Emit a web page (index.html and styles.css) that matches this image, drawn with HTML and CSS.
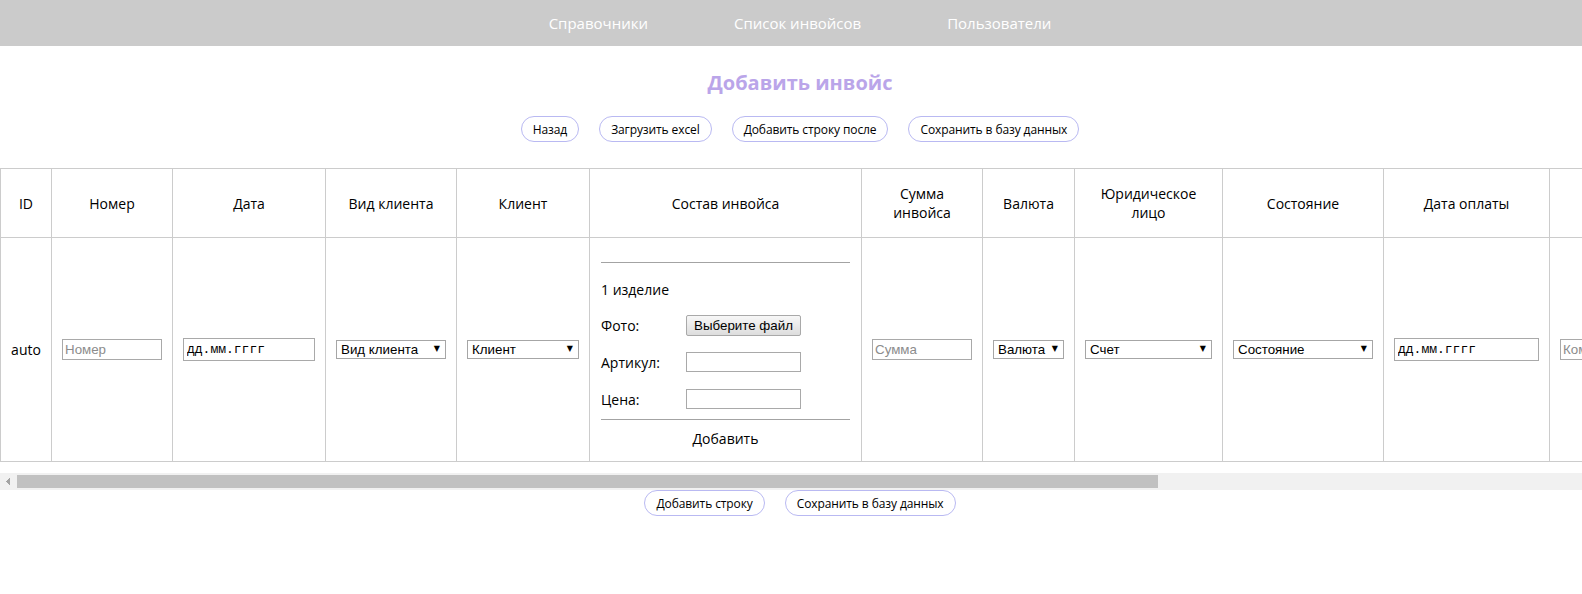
FILE: index.html
```html
<!DOCTYPE html>
<html lang="ru">
<head>
  <meta charset="UTF-8">
  <meta name="viewport" content="width=device-width, initial-scale=1.0">
  <title>Добавить инвойс</title>
  <link rel="stylesheet" href="styles.css">
</head>
<body>
  <nav class="topnav">
    <a href="#">Справочники</a>
    <a href="#">Список инвойсов</a>
    <a href="#">Пользователи</a>
  </nav>

  <main class="invoice-page">
    <h1 class="page-title">Добавить инвойс</h1>

    <div class="actions actions-top">
      <button class="pill-btn">Назад</button>
      <button class="pill-btn">Загрузить excel</button>
      <button class="pill-btn">Добавить строку после</button>
      <button class="pill-btn">Сохранить в базу данных</button>
    </div>

    <div class="table-scroll">
      <table class="invoice-table">
        <colgroup>
          <col style="width: 51px">
          <col style="width: 121px">
          <col style="width: 153px">
          <col style="width: 131px">
          <col style="width: 133px">
          <col style="width: 272px">
          <col style="width: 121px">
          <col style="width: 92px">
          <col style="width: 148px">
          <col style="width: 161px">
          <col style="width: 166px">
          <col style="width: 216px">
          <col style="width: 200px">
          <col style="width: 195px">
        </colgroup>
        <thead>
          <tr>
            <th>ID</th>
            <th>Номер</th>
            <th>Дата</th>
            <th>Вид клиента</th>
            <th>Клиент</th>
            <th>Состав инвойса</th>
            <th>Сумма<br>инвойса</th>
            <th>Валюта</th>
            <th>Юридическое<br>лицо</th>
            <th>Состояние</th>
            <th>Дата оплаты</th>
            <th></th>
            <th></th>
            <th></th>
          </tr>
        </thead>
        <tbody>
          <tr>
            <td>auto</td>
            <td><input class="field" type="text" placeholder="Номер"></td>
            <td><input class="field field-date" type="text" value="дд.мм.гггг"></td>
            <td>
              <span class="select-box">
                <select><option>Вид клиента</option></select>
              </span>
            </td>
            <td>
              <span class="select-box">
                <select><option>Клиент</option></select>
              </span>
            </td>
            <td class="composition">
              <div class="item-block">
                <div class="item-title">1 изделие</div>
                <div class="item-field">
                  <span class="item-label">Фото:</span>
                  <button class="file-btn">Выберите файл</button>
                </div>
                <div class="item-field">
                  <span class="item-label">Артикул:</span>
                  <input class="item-input" type="text">
                </div>
                <div class="item-field">
                  <span class="item-label">Цена:</span>
                  <input class="item-input" type="text">
                </div>
              </div>
              <div class="item-add">Добавить</div>
            </td>
            <td><input class="field" type="text" placeholder="Сумма"></td>
            <td>
              <span class="select-box">
                <select><option>Валюта</option></select>
              </span>
            </td>
            <td>
              <span class="select-box">
                <select><option>Счет</option></select>
              </span>
            </td>
            <td>
              <span class="select-box">
                <select><option>Состояние</option></select>
              </span>
            </td>
            <td><input class="field field-date" type="text" value="дд.мм.гггг"></td>
            <td><input class="field" type="text" placeholder="Комментарий"></td>
            <td></td>
            <td></td>
          </tr>
        </tbody>
      </table>
    </div>

    <div class="hscroll">
      <span class="hscroll-arrow"></span>
      <span class="hscroll-thumb"></span>
    </div>

    <div class="actions actions-bottom">
      <button class="pill-btn">Добавить строку</button>
      <button class="pill-btn">Сохранить в базу данных</button>
    </div>
  </main>
</body>
</html>
```

FILE: styles.css
```css
/* Base */
* {
  box-sizing: border-box;
}

body {
  margin: 0;
  font-family: 'Open Sans', 'Liberation Sans', sans-serif;
  color: #000;
  background-color: #fff;
}

/* Top navigation */
.topnav {
  display: flex;
  justify-content: center;
  gap: 86px;
  height: 46px;
  padding-left: 18px;
  background-color: #cbcbcb;
}

.topnav a {
  color: #fff;
  font-size: 15px;
  line-height: 46px;
  text-decoration: none;
}

/* Title and action buttons */
.page-title {
  margin: 23px 0 0;
  padding-left: 18px;
  text-align: center;
  font-size: 20px;
  line-height: 27px;
  font-weight: 700;
  color: #baa5e9;
}

.actions {
  display: flex;
  justify-content: center;
  gap: 20px;
  padding-left: 18px;
}

.actions-top {
  margin: 20px 0 26px;
}

.pill-btn {
  height: 26px;
  padding: 0 11px;
  border: 1px solid #b9b9f2;
  border-radius: 13px;
  background-color: #fff;
  font-family: 'Open Sans', sans-serif;
  font-size: 12px;
  letter-spacing: -0.1px;
  color: #000;
  cursor: pointer;
}

/* Table */
.table-scroll {
  overflow: hidden;
  padding-bottom: 11px;
}

/* horizontal scrollbar of the table area */
.hscroll {
  display: flex;
  align-items: center;
  height: 17px;
  background-color: #f1f1f1;
}

.hscroll-arrow {
  width: 17px;
  height: 17px;
  flex-shrink: 0;
  background:
    linear-gradient(to bottom right, transparent 50%, #a3a3a3 50%) 6px 5px / 4px 4px no-repeat,
    linear-gradient(to top right, transparent 50%, #a3a3a3 50%) 6px 9px / 4px 4px no-repeat;
}

.hscroll-thumb {
  width: 1141px;
  height: 13px;
  background-color: #c1c1c1;
}

.invoice-table {
  width: 2160px;
  table-layout: fixed;
  border-collapse: collapse;
}

.invoice-table th,
.invoice-table td {
  border: 1px solid #ccc;
  padding: 0 10px;
  text-align: center;
  vertical-align: middle;
  font-size: 14px;
  line-height: 19px;
}

.invoice-table th {
  padding: 15px 10px;
  font-weight: 400;
}

/* Form controls */
.field {
  display: block;
  width: 100%;
  height: 21px;
  padding: 0 2px;
  border: 1px solid #a9a9a9;
  font-family: 'Liberation Sans', Arial, sans-serif;
  font-size: 13.33px;
  color: #000;
}

.field::placeholder {
  color: #8c8c8c;
}

.field-date {
  height: 23px;
  padding: 0 3px;
  font-family: 'Liberation Mono', monospace;
  font-size: 13px;
}

.select-box {
  position: relative;
  display: block;
}

.select-box select {
  display: block;
  width: 100%;
  height: 19px;
  padding: 0 16px 0 4px;
  border: 1px solid #a6a6a6;
  border-radius: 0;
  background-color: #fff;
  font-family: 'Liberation Sans', Arial, sans-serif;
  font-size: 13.33px;
  color: #000;
  appearance: none;
  -webkit-appearance: none;
}

.select-box::after {
  content: "▼";
  position: absolute;
  right: 6px;
  top: 4px;
  font-family: 'DejaVu Sans', sans-serif;
  font-size: 8px;
  line-height: 10px;
  pointer-events: none;
}

/* Invoice composition cell */
.invoice-table td.composition {
  padding: 24px 11px 12px;
  text-align: left;
}

.item-block {
  border-top: 1px solid #a3a3a3;
  border-bottom: 1px solid #a3a3a3;
  padding-bottom: 9px;
}

.item-title {
  margin-top: 17px;
  line-height: 20px;
}

.item-field {
  display: flex;
  align-items: center;
  height: 22px;
  margin-top: 14px;
}

.item-field + .item-field {
  margin-top: 15px;
}

.item-label {
  width: 85px;
  flex-shrink: 0;
}

.file-btn {
  width: 115px;
  height: 21px;
  padding: 0;
  border: 1px solid #a9a9a9;
  border-radius: 2px;
  background: linear-gradient(#f7f7f7, #dddddd);
  font-family: 'Liberation Sans', Arial, sans-serif;
  font-size: 13.33px;
  color: #000;
}

.item-input {
  width: 115px;
  height: 20px;
  border: 1px solid #a9a9a9;
}

.item-add {
  margin-top: 9px;
  line-height: 20px;
  text-align: center;
}
```
